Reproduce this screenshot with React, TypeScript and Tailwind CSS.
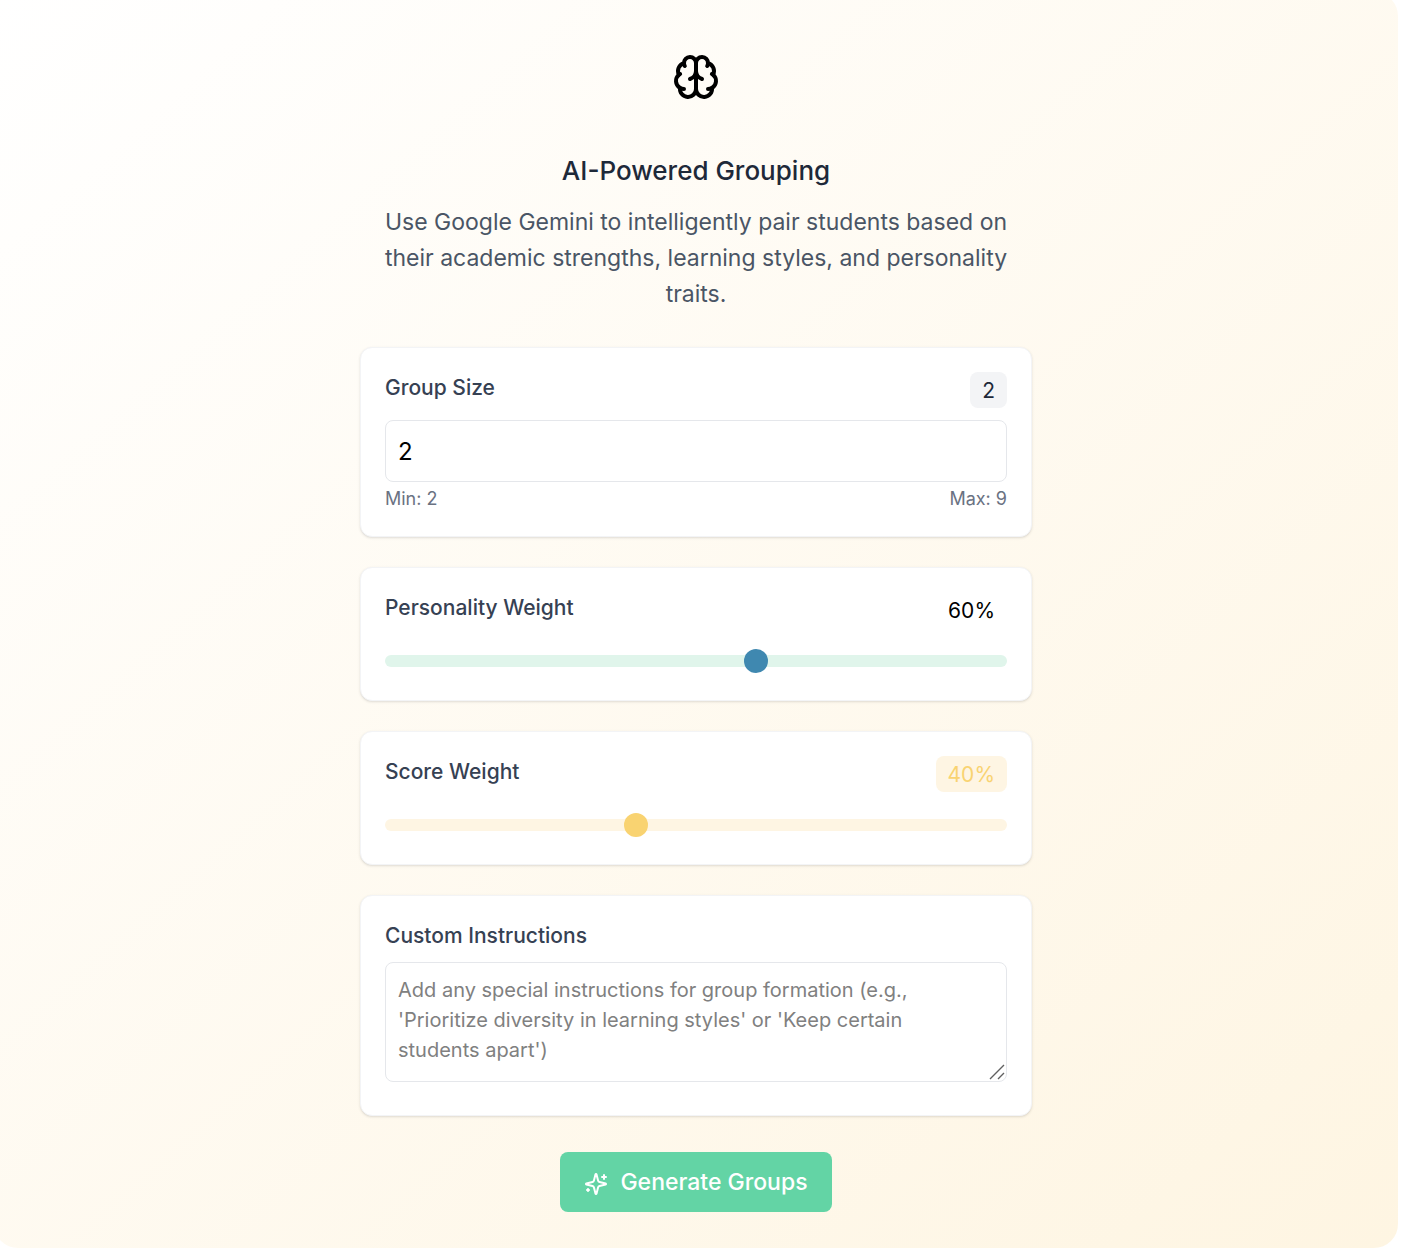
import { useState } from "react";

const card = "rounded-xl border border-gray-100 bg-white p-6 shadow-sm";
const label = "text-[21px] leading-8 font-medium text-gray-700";
const output = "h-9 rounded-lg px-3 text-[21px] leading-[38px]";
const slider =
  "mt-[27px] mb-[9px] block h-3 w-full cursor-pointer appearance-none rounded-full [&::-webkit-slider-thumb]:size-6 [&::-webkit-slider-thumb]:appearance-none [&::-webkit-slider-thumb]:rounded-full";

function Icon({ paths, className }: { paths: string[]; className: string }) {
  return (
    <svg viewBox="0 0 24 24" fill="none" stroke="currentColor" strokeWidth={2} strokeLinecap="round" strokeLinejoin="round" aria-hidden="true" className={className}>
      {paths.map((d) => <path key={d} d={d} />)}
    </svg>
  );
}

const brain = [
  "M12 5a3 3 0 1 0-5.997.125 4 4 0 0 0-2.526 5.77 4 4 0 0 0 .556 6.588A4 4 0 1 0 12 18Z",
  "M12 5a3 3 0 1 1 5.997.125 4 4 0 0 1 2.526 5.77 4 4 0 0 1-.556 6.588A4 4 0 1 1 12 18Z",
  "M15 13a4.5 4.5 0 0 1-3-4 4.5 4.5 0 0 1-3 4",
  "M17.599 6.5a3 3 0 0 0 .399-1.375",
  "M6.003 5.125A3 3 0 0 0 6.401 6.5",
  "M3.477 10.896a4 4 0 0 1 .585-.396",
  "M19.938 10.5a4 4 0 0 1 .585.396",
  "M6 18a4 4 0 0 1-1.967-.516",
  "M19.967 17.484A4 4 0 0 1 18 18",
];

const sparkles = [
  "M9.937 15.5A2 2 0 0 0 8.5 14.063l-6.135-1.582a.5.5 0 0 1 0-.962L8.5 9.936A2 2 0 0 0 9.937 8.5l1.582-6.135a.5.5 0 0 1 .963 0L14.063 8.5A2 2 0 0 0 15.5 9.937l6.135 1.581a.5.5 0 0 1 0 .964L15.5 14.063a2 2 0 0 0-1.437 1.437l-1.582 6.135a.5.5 0 0 1-.963 0z",
  "M20 3v4",
  "M22 5h-4",
  "M4 17v2",
  "M5 18H3",
];

export default function App() {
  const [size, setSize] = useState("2");
  const [personality, setPersonality] = useState(60);
  const score = 100 - personality;
  return (
    <div className="min-h-screen overflow-hidden bg-white pr-4 pb-2 font-['Inter',sans-serif]">
      <main className="-mt-2 -ml-1.5 flex flex-col items-center rounded-3xl bg-linear-to-br from-white to-[#fef5e2] px-6 pt-[61px] pb-9">
        <Icon paths={brain} className="size-12 text-black" />
        <h1 className="mt-[50px] text-[26px] leading-10 font-medium text-gray-800">AI-Powered Grouping</h1>
        <p className="mt-[13px] max-w-2xl text-center text-[23px] leading-9 text-gray-600">
          Use Google Gemini to intelligently pair students based on their academic strengths, learning styles, and personality traits.
        </p>
        <div className="mt-[35px] flex w-full max-w-2xl flex-col gap-[30px]">
          <section className={card}>
            <div className="flex items-start justify-between">
              <label htmlFor="size" className={label}>Group Size</label>
              <output htmlFor="size" className={`${output} bg-gray-100 text-gray-800`}>{size}</output>
            </div>
            <input id="size" inputMode="numeric" value={size} onChange={(e) => setSize(e.target.value)}
              className="mt-3 block h-[62px] w-full rounded-lg border border-gray-200 px-3 text-2xl text-black" />
            <div className="mt-1 flex justify-between text-lg leading-[26px] text-gray-500">
              <span>Min: 2</span>
              <span>Max: 9</span>
            </div>
          </section>
          <section className={card}>
            <div className="flex items-start justify-between">
              <label htmlFor="personality" className={label}>Personality Weight</label>
              <output htmlFor="personality" className={`${output} text-black`}>{personality}%</output>
            </div>
            <input id="personality" type="range" value={personality} onChange={(e) => setPersonality(Number(e.target.value))}
              className={`${slider} bg-[#e0f5eb] [&::-webkit-slider-thumb]:bg-[#3f88b0]`} />
          </section>
          <section className={card}>
            <div className="flex items-start justify-between">
              <label htmlFor="score" className={label}>Score Weight</label>
              <output htmlFor="score" className={`${output} bg-[#fef5e3] text-[#f9d371]`}>{score}%</output>
            </div>
            <input id="score" type="range" value={score} onChange={(e) => setPersonality(100 - Number(e.target.value))}
              className={`${slider} bg-[#fef5e3] [&::-webkit-slider-thumb]:bg-[#f9d371]`} />
          </section>
          <section className={card}>
            <label htmlFor="custom" className={`${label} block`}>Custom Instructions</label>
            <div className="relative mt-2.5 mb-[9px]">
              <textarea id="custom" className="block h-[120px] w-full resize rounded-lg border border-gray-200 py-3 pr-9 pl-3 text-xl leading-[30px] placeholder:text-[#808080] [&::-webkit-resizer]:hidden"
                placeholder="Add any special instructions for group formation (e.g., 'Prioritize diversity in learning styles' or 'Keep certain students apart')" />
              <svg viewBox="0 0 16 16" aria-hidden="true" className="pointer-events-none absolute right-0.5 bottom-0.5 size-4 text-[#606060]" fill="none" stroke="currentColor" strokeWidth="1.4">
                <path d="M1 15 15 1M9 15l6-6" />
              </svg>
            </div>
          </section>
        </div>
        <button type="button" className="mt-9 h-[60px] rounded-lg bg-[#63d4a5] px-6 text-[23px] leading-9 font-medium text-white">
          <Icon paths={sparkles} className="mr-3 inline size-6 align-middle" />
          Generate Groups
        </button>
      </main>
    </div>
  );
}
